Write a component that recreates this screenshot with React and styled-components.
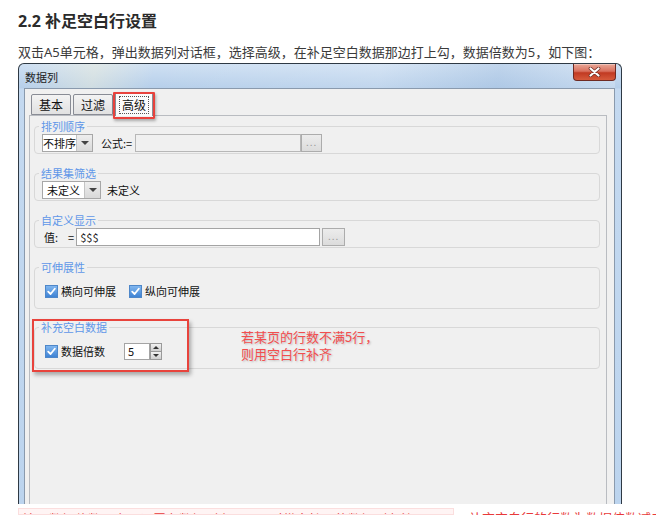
import React from "react";
import styled, { createGlobalStyle } from "styled-components";

const Global = createGlobalStyle`
  html, body { margin: 0; padding: 0; background: #fff; width: 656px; height: 515px; overflow: hidden; }
  body { font-family: "Noto Sans", "Noto Sans CJK SC", sans-serif; color: #333; }
`;

const Page = styled.div`
  padding: 10px 0 0 18px;
`;

const Heading = styled.h2`
  margin: 0 0 10px 0;
  font-size: 16px;
  line-height: 22px;
  font-weight: 700;
  color: #2b2b2b;
`;

const Para = styled.p`
  margin: 0 0 1px 0;
  font-size: 13px;
  line-height: 20px;
  color: #3a3a3a;
`;

const Dialog = styled.div`
  width: 591px;
  height: 440px;
  border: 1px solid #2e3944;
  border-bottom: none;
  border-radius: 6px 6px 0 0;
  background: linear-gradient(to bottom, #cfe0f3 0px, #b6cfea 24px, #c4d9f0 25px, #bcd4ee 100%);
  padding: 0 6px 0 5px;
  display: flex;
  flex-direction: column;
  font-family: "Noto Sans CJK SC", "Noto Sans", sans-serif;
  font-size: 11px;
  color: #111;
`;

const TitleBar = styled.div`
  height: 24px;
  display: flex;
  justify-content: space-between;
  align-items: flex-start;
  background: linear-gradient(100deg, rgba(255,255,255,0) 0%, rgba(255,246,210,0.35) 12%, rgba(255,255,255,0) 22%, rgba(255,255,255,0.15) 60%, rgba(150,180,215,0.25) 80%, rgba(255,255,255,0.2) 100%);
`;

const Title = styled.span`
  margin: 7px 0 0 1px;
  font-size: 11px;
  line-height: 12px;
  color: #1d1d1d;
`;

const CloseBtn = styled.div`
  width: 41px;
  height: 16px;
  margin-right: -1px;
  border: 1px solid #6e2a22;
  border-top: none;
  border-radius: 0 0 4px 4px;
  background: linear-gradient(to bottom, #e9a898 0%, #d9705e 45%, #c13a22 55%, #d65a3c 100%);
  display: flex;
  align-items: center;
  justify-content: center;
  box-shadow: inset 0 1px 0 rgba(255,255,255,0.35);
`;

const Client = styled.div`
  flex: 1;
  border: 1px solid #8a9aad;
  border-bottom: none;
  background: #f0f0f0;
  padding: 2px 4px 0 4px;
  display: flex;
  flex-direction: column;
`;

const TabRow = styled.div`
  display: flex;
  align-items: flex-end;
  gap: 2px;
  margin-left: 2px;
  height: 24px;
  position: relative;
  z-index: 1;
`;

const Tab = styled.div`
  position: relative;
  height: ${p => (p.$active ? "24px" : "21px")};
  padding: 0 ${p => (p.$active ? "3px" : "4px")};
  margin: ${p => (p.$active ? "0 0 -1px 0" : "0")};
  box-sizing: border-box;
  border: 1px solid #898c95;
  border-bottom: ${p => (p.$active ? "none" : "1px solid #898c95")};
  border-top: ${p => (p.$active ? "2px solid #e3a83a" : "1px solid #898c95")};
  border-radius: 2px 2px 0 0;
  background: ${p => (p.$active ? "#fbfbfb" : "linear-gradient(to bottom, #f3f3f3, #e1e1e1)")};
  display: flex;
  align-items: center;
  font-size: 12px;
  color: #111;
`;

const TabLabel = styled.span`
  line-height: 14px;
  padding: 1px 2px;
  border: 1px dotted ${p => (p.$focus ? "#555" : "transparent")};
`;

const TabHighlight = styled.div`
  position: absolute;
  left: -3px;
  top: -2px;
  right: -3px;
  bottom: -3px;
  border: 2px solid #e8423c;
  border-radius: 1px;
  box-shadow: 1px 2px 3px rgba(0,0,0,0.3);
  pointer-events: none;
`;

const Panel = styled.div`
  position: relative;
  flex: 1;
  margin: 0 3px 0 0;
  border: 1px solid #b9bcc1;
  border-bottom: none;
  background: #f0f0f0;
  padding: 4px 6px 0 4px;
`;

const Group = styled.fieldset`
  margin: 0 0 ${p => p.$gap || 13}px 0;
  padding: ${p => p.$tall ? "9px 6px 8px 7px" : "2px 6px 1px 7px"};
  border: 1px solid #d8d8d8;
  border-radius: 4px;
  min-width: 0;
`;

const Legend = styled.legend`
  margin-left: -3px;
  padding: 0 2px;
  font-size: 11px;
  line-height: 12px;
  color: #5f97e8;
`;

const Row = styled.div`
  display: flex;
  align-items: center;
  height: 18px;
`;

const Combo = styled.div`
  display: flex;
  width: ${p => p.$w}px;
  height: 18px;
  box-sizing: border-box;
  border: 1px solid #a7a7a7;
  background: #fff;
`;

const ComboText = styled.span`
  flex: 1;
  line-height: 16px;
  padding-left: ${p => p.$pad || 0}px;
  font-size: 11px;
  white-space: nowrap;
`;

const ComboArrow = styled.span`
  width: 15px;
  border-left: 1px solid #c4c4c4;
  background: linear-gradient(to bottom, #eeeeee, #d9d9d9);
  display: flex;
  align-items: center;
  justify-content: center;
  &::after {
    content: "";
    border-left: 4px solid transparent;
    border-right: 4px solid transparent;
    border-top: 4px solid #444;
  }
`;

const Label = styled.span`
  margin-left: ${p => p.$ml || 0}px;
  margin-right: ${p => p.$mr || 0}px;
  font-size: 11px;
  line-height: 14px;
  white-space: nowrap;
`;

const TextInput = styled.div`
  width: ${p => p.$w}px;
  height: 18px;
  box-sizing: border-box;
  border: 1px solid ${p => (p.$disabled ? "#b7b7b7" : "#a4a4a4")};
  background: ${p => (p.$disabled ? "#f0f0f0" : "#ffffff")};
  font-size: 11px;
  line-height: 16px;
  padding-left: 3px;
  color: #222;
`;

const DotsBtn = styled.div`
  width: ${p => p.$w}px;
  height: 18px;
  margin-left: ${p => p.$ml || 0}px;
  box-sizing: border-box;
  border: 1px solid #acacac;
  background: linear-gradient(to bottom, #ececec, #dcdcdc);
  color: #9a9a9a;
  font-size: 10px;
  line-height: 14px;
  text-align: center;
  letter-spacing: 1px;
`;

const CheckBox = styled.span`
  width: 11px;
  height: 11px;
  border: 1px solid #4e87c9;
  background: linear-gradient(to bottom, #80b6ef, #3f83d4);
  display: inline-flex;
  align-items: center;
  justify-content: center;
  margin-left: ${p => p.$ml || 0}px;
  margin-right: 3px;
`;

const Spin = styled.div`
  display: flex;
  height: 17px;
  margin-left: 19px;
`;

const SpinInput = styled.div`
  width: 26px;
  box-sizing: border-box;
  border: 1px solid #a4a4a4;
  background: #fff;
  font-size: 11px;
  line-height: 15px;
  padding-left: 3px;
`;

const SpinButtons = styled.div`
  width: 12px;
  display: flex;
  flex-direction: column;
`;

const SpinBtn = styled.span`
  flex: 1;
  border: 1px solid #9a9a9a;
  margin-top: ${p => (p.$down ? "-1px" : "0")};
  background: linear-gradient(to bottom, #f2f2f2, #cfcfcf);
  display: flex;
  align-items: center;
  justify-content: center;
  &::after {
    content: "";
    border-left: 3px solid transparent;
    border-right: 3px solid transparent;
    ${p => (p.$down ? "border-top: 3px solid #333;" : "border-bottom: 3px solid #333;")}
  }
`;

const RedBox = styled.div`
  position: absolute;
  left: 2px;
  top: 203px;
  width: 153px;
  height: 49px;
  border: 2px solid #e8433c;
  box-shadow: 2px 3px 4px rgba(0,0,0,0.3);
  pointer-events: none;
`;

const Note = styled.div`
  position: absolute;
  left: 211px;
  top: 212px;
  font-size: 13px;
  line-height: 17px;
  color: #f24e4e;
  text-shadow: 1px 1px 2px rgba(0,0,0,0.22);
  font-family: "Noto Sans CJK SC", sans-serif;
`;

const Bottom = styled.div`
  margin-top: 4px;
  height: 7px;
  overflow: hidden;
  white-space: nowrap;
  display: flex;
  font-size: 13px;
  line-height: 20px;
  color: #e83a3a;
`;

const Mark = styled.span`
  flex: none;
  width: 436px;
  overflow: hidden;
  background: #fff4f4;
  border: 1px solid #fbdede;
  padding-left: 4px;
  box-sizing: border-box;
`;

const Rest = styled.span`
  flex: none;
  padding-left: 2px;
`;

const Check = () => (
  <svg width="9" height="9" viewBox="0 0 9 9">
    <path d="M1.2 4.6 L3.6 7 L7.8 1.8" fill="none" stroke="#fff" strokeWidth="1.8" strokeLinecap="round" strokeLinejoin="round" />
  </svg>
);

export default function App() {
  return (
    <>
      <Global />
      <Page>
        <Heading>2.2 补足空白行设置</Heading>
        <Para>双击A5单元格，弹出数据列对话框，选择高级，在补足空白数据那边打上勾，数据倍数为5，如下图：</Para>
        <Dialog>
          <TitleBar>
            <Title>数据列</Title>
            <CloseBtn>
              <svg width="13" height="10" viewBox="0 0 13 10">
                <path d="M2.5 1.5 L10.5 8.5 M10.5 1.5 L2.5 8.5" stroke="#6b2a22" strokeWidth="3.6" strokeLinecap="round" />
                <path d="M2.5 1.5 L10.5 8.5 M10.5 1.5 L2.5 8.5" stroke="#fff" strokeWidth="2.2" strokeLinecap="round" />
              </svg>
            </CloseBtn>
          </TitleBar>
          <Client>
            <TabRow>
              <Tab><TabLabel>基本</TabLabel></Tab>
              <Tab><TabLabel>过滤</TabLabel></Tab>
              <Tab $active>
                <TabLabel $focus>高级</TabLabel>
                <TabHighlight />
              </Tab>
            </TabRow>
            <Panel>
              <Group>
                <Legend>排列顺序</Legend>
                <Row>
                  <Combo $w={51}><ComboText>不排序</ComboText><ComboArrow /></Combo>
                  <Label $ml={8} $mr={3}>公式:=</Label>
                  <TextInput $w={166} $disabled />
                  <DotsBtn $w={21}>...</DotsBtn>
                </Row>
              </Group>
              <Group>
                <Legend>结果集筛选</Legend>
                <Row>
                  <Combo $w={59}><ComboText $pad={4}>未定义</ComboText><ComboArrow /></Combo>
                  <Label $ml={6}>未定义</Label>
                </Row>
              </Group>
              <Group>
                <Legend>自定义显示</Legend>
                <Row>
                  <Label $ml={2}>值:</Label>
                  <Label $ml={10} $mr={2}>=</Label>
                  <TextInput $w={244}>$$$</TextInput>
                  <DotsBtn $w={23} $ml={2}>...</DotsBtn>
                </Row>
              </Group>
              <Group $tall $gap={12}>
                <Legend>可伸展性</Legend>
                <Row>
                  <CheckBox $ml={3}><Check /></CheckBox>
                  <Label>横向可伸展</Label>
                  <CheckBox $ml={13}><Check /></CheckBox>
                  <Label>纵向可伸展</Label>
                </Row>
              </Group>
              <Group $tall>
                <Legend>补充空白数据</Legend>
                <Row>
                  <CheckBox $ml={3}><Check /></CheckBox>
                  <Label>数据倍数</Label>
                  <Spin>
                    <SpinInput>5</SpinInput>
                    <SpinButtons>
                      <SpinBtn />
                      <SpinBtn $down />
                    </SpinButtons>
                  </Spin>
                </Row>
              </Group>
              <RedBox />
              <Note>
                若某页的行数不满5行，<br />
                则用空白行补齐
              </Note>
            </Panel>
          </Client>
        </Dialog>
        <Bottom>
          <Mark>注：数据倍数一定要设置在数据列上，且只对纵向扩展的数据列有效</Mark>
          <Rest>，补充空白行的行数为数据倍数减去当页实际行数</Rest>
        </Bottom>
      </Page>
    </>
  );
}
